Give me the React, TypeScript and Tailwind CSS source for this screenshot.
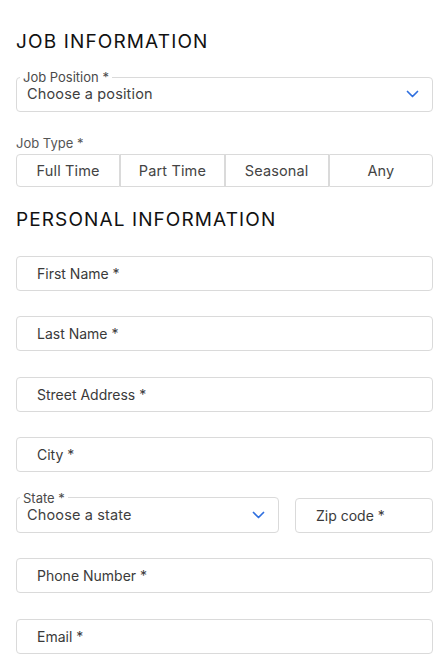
import React from 'react';

const font = { fontFamily: 'Inter, "Noto Sans", sans-serif' };

function Chevron() {
  return (
    <svg width="13" height="8" viewBox="0 0 13 8" fill="none" className="shrink-0">
      <path d="M1.5 1.5l5 5 5-5" stroke="#2f6fdf" strokeWidth="1.7" strokeLinecap="round" strokeLinejoin="round" />
    </svg>
  );
}

interface SelectBoxProps {
  label: string;
  value: string;
  className?: string;
}

function SelectBox({ label, value, className = '' }: SelectBoxProps) {
  return (
    <fieldset className={`border border-[#dadada] rounded-[4px] pl-[10px] pr-[13px] pb-[8px] ${className}`}>
      <legend className="-ml-[7px] px-[3px] text-[13px] leading-[16px] text-[#4a4a4a]">{label}</legend>
      <div className="flex items-center justify-between h-[18px]">
        <span className="text-[14.5px] tracking-[0.01em] text-[#3f3f3f]">{value}</span>
        <Chevron />
      </div>
    </fieldset>
  );
}

function TextBox({ placeholder, className = '' }: { placeholder: string; className?: string }) {
  return (
    <div className={`h-[35px] border border-[#dadada] rounded-[4px] pl-5 flex items-center ${className}`}>
      <span className="text-[14px] text-[#3a3a3a]">{placeholder}</span>
    </div>
  );
}

const jobTypes = ['Full Time', 'Part Time', 'Seasonal', 'Any'];

export default function App() {
  return (
    <div className="bg-white min-h-[661px] pl-4 pr-[10px] pt-[30px]" style={font}>
      <h2 className="text-[19px] leading-[24px] font-normal tracking-[0.06em] text-[#111]">JOB INFORMATION</h2>

      <SelectBox label="Job Position *" value="Choose a position" className="mt-[15px]" />

      <div className="mt-[23px] text-[13px] leading-[16px] text-[#555]">Job Type *</div>
      <div className="mt-[3px] grid grid-cols-4">
        {jobTypes.map((t, i) => (
          <button
            key={t}
            type="button"
            className={`h-[33px] border border-[#dadada] text-[14.5px] tracking-[0.01em] text-[#444] ${i === 0 ? 'rounded-l-[4px]' : ''} ${i === jobTypes.length - 1 ? 'rounded-r-[4px]' : ''}`}
          >
            {t}
          </button>
        ))}
      </div>

      <h2 className="mt-[21px] text-[19px] leading-[24px] font-normal tracking-[0.058em] text-[#111]">PERSONAL INFORMATION</h2>

      <div className="mt-[23.5px] flex flex-col gap-[25.5px]">
        <TextBox placeholder="First Name *" />
        <TextBox placeholder="Last Name *" />
        <TextBox placeholder="Street Address *" />
        <TextBox placeholder="City *" />
        <div className="flex items-end gap-4 -mt-2">
          <SelectBox label="State *" value="Choose a state" className="flex-1" />
          <TextBox placeholder="Zip code *" className="w-[138px]" />
        </div>
        <TextBox placeholder="Phone Number *" />
        <TextBox placeholder="Email *" />
      </div>
    </div>
  );
}
